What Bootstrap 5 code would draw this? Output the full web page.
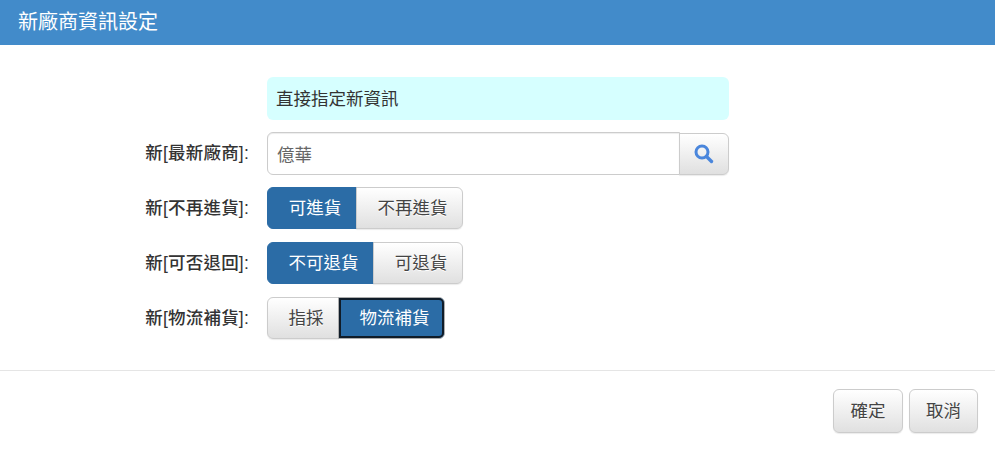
<!DOCTYPE html>
<html lang="zh-Hant">
<head>
<meta charset="utf-8">
<title>新廠商資訊設定</title>
<link rel="stylesheet" href="https://cdn.jsdelivr.net/npm/bootstrap@5.3.0/dist/css/bootstrap.min.css">
<style>
html,body{height:450px;overflow:hidden;background:#fff}
body,.btn,.form-control{font-family:"Liberation Sans","Noto Sans CJK TC",sans-serif;font-size:17.5px;color:#333}
.dlg-head{height:45px;background:#428bca;color:#fff;font-size:20px;line-height:45px;padding-left:18px}
.dlg-body{padding-top:32px;height:326px;border-bottom:1px solid #e5e5e5}
.dlg-row{display:flex;align-items:center;margin-bottom:13px}
.dlg-row.tight{margin-bottom:12px}
.dlg-row.first{margin-bottom:12px}
.dlg-label{width:249px;margin:0;text-align:right;font-weight:500;letter-spacing:.2px;color:#333;flex:none}
.dlg-field{width:462px;margin-left:18px;flex:none}
.note{background:#d6ffff;border-radius:6px;height:43px;line-height:45px;padding-left:9px;color:#333}
.dlg-field .form-control{height:43px;border-color:#ccc;border-radius:6px;padding:6px 9px;color:#666;box-shadow:inset 0 1px 1px rgba(0,0,0,.075)}
.gbtn{height:42px;padding:1px 0 0;white-space:nowrap;border:1px solid #ccc;border-radius:6px;color:#444;background:linear-gradient(#fff,#e0e0e0);text-shadow:0 1px 0 #fff;box-shadow:0 1px 1px rgba(0,0,0,.08);display:inline-flex;align-items:center;justify-content:center}
.btn-group .gbtn{padding-left:6px}
.gbtn:hover{color:#444;border-color:#ccc}
.gbtn.on,.gbtn.on:hover{background:#2b6ca6;border-color:#2b6ca6;color:#fff;text-shadow:none;box-shadow:none}
.gbtn.ring,.gbtn.ring:hover{border:1px solid #adadad;outline:2px solid #101c28;outline-offset:-3px;z-index:2}
.srch{width:50px;align-self:flex-end;padding:0}
.w-a{width:90px}.w-b{width:107px}.w-c{width:107px}.w-d{width:90px}.w-e{width:72px}.w-f{width:107px}
.dlg-foot{padding:18px 17px 0 0;gap:6px}
.fbtn{height:44px;width:70px}
.fbtn.narrow{width:69px}
</style>
</head>
<body>
<div class="dlg-head">新廠商資訊設定</div>
<div class="dlg-body">
  <div class="dlg-row first">
    <div class="dlg-label"></div>
    <div class="dlg-field note">直接指定新資訊</div>
  </div>
  <div class="dlg-row tight">
    <label class="dlg-label">新[最新廠商]:</label>
    <div class="dlg-field input-group flex-nowrap">
      <input type="text" class="form-control" value="億華">
      <button type="button" class="btn gbtn srch" aria-label="搜尋">
        <svg width="20" height="20" viewBox="0 0 20 20" fill="none" stroke="#4a86dc"><circle cx="8" cy="8" r="6" stroke-width="3"/><path d="M12.5 12.5l5 5" stroke-width="3.4" stroke-linecap="round"/></svg>
      </button>
    </div>
  </div>
  <div class="dlg-row">
    <label class="dlg-label">新[不再進貨]:</label>
    <div class="dlg-field"><div class="btn-group">
      <button type="button" class="btn gbtn on w-a">可進貨</button>
      <button type="button" class="btn gbtn w-b">不再進貨</button>
    </div></div>
  </div>
  <div class="dlg-row">
    <label class="dlg-label">新[可否退回]:</label>
    <div class="dlg-field"><div class="btn-group">
      <button type="button" class="btn gbtn on w-c">不可退貨</button>
      <button type="button" class="btn gbtn w-d">可退貨</button>
    </div></div>
  </div>
  <div class="dlg-row">
    <label class="dlg-label">新[物流補貨]:</label>
    <div class="dlg-field"><div class="btn-group">
      <button type="button" class="btn gbtn w-e">指採</button>
      <button type="button" class="btn gbtn on ring w-f">物流補貨</button>
    </div></div>
  </div>
</div>
<div class="dlg-foot d-flex justify-content-end">
  <button type="button" class="btn gbtn fbtn">確定</button>
  <button type="button" class="btn gbtn fbtn narrow">取消</button>
</div>
<script src="https://cdn.jsdelivr.net/npm/bootstrap@5.3.0/dist/js/bootstrap.bundle.min.js"></script>
</body>
</html>
